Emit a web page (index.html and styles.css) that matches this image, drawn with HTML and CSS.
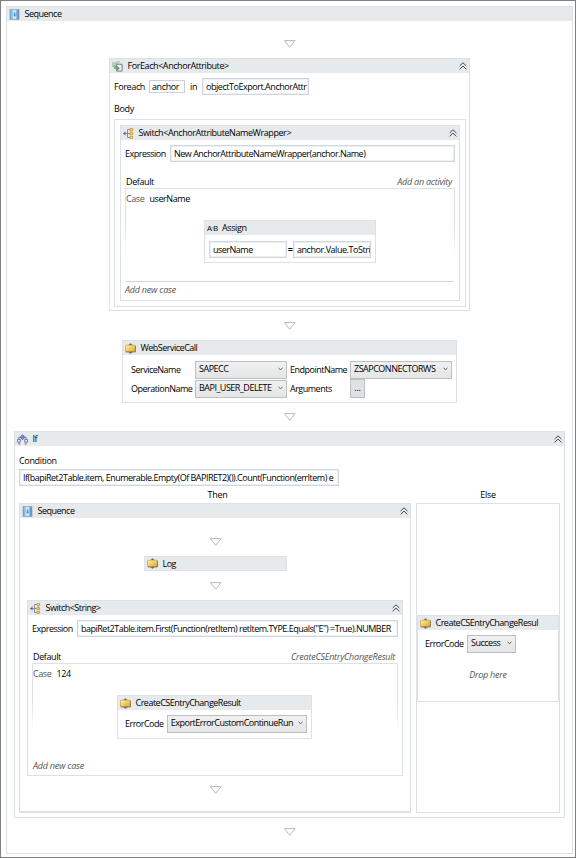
FILE: index.html
```html
<!DOCTYPE html>
<html lang="en">
<head>
<meta charset="utf-8">
<title>Sequence</title>
<link rel="stylesheet" href="styles.css">
</head>
<body>
<svg class="defs" width="0" height="0" aria-hidden="true">
  <defs>
    <linearGradient id="gold" x1="0" y1="0" x2="1" y2="1"><stop offset="0" stop-color="#fff2a8"/><stop offset="1" stop-color="#dfa51c"/></linearGradient>
    <linearGradient id="blue" x1="0" y1="0" x2="1" y2="0"><stop offset="0" stop-color="#5b9fd0"/><stop offset=".45" stop-color="#d5f3fd"/><stop offset="1" stop-color="#477db0"/></linearGradient>
    <symbol id="seq" viewBox="0 0 10 11"><rect x=".5" y=".5" width="9" height="10" fill="url(#blue)" stroke="#8aa3bc" stroke-width=".7"/><path d="M3 1.2h4v2H3zM3 7.8h4v2H3z" fill="#effcff" stroke="#6eb0d6" stroke-width=".5"/><path d="M5 3.5v3.3M3.8 5.7 5 7l1.2-1.3" fill="none" stroke="#2c86bd" stroke-width=".8"/></symbol>
    <symbol id="act" viewBox="0 0 11 11"><path d="M3.5 2.2 5.5.5l2 1.7M3.5 9l2 1.5L7.5 9" fill="#676157" stroke="#676157" stroke-width=".5"/><rect x=".5" y="2.2" width="10" height="6.6" rx=".5" fill="url(#gold)" stroke="#b8943f" stroke-width=".6"/><path d="M.8 8.9h9.6V3" fill="none" stroke="#7e6535" stroke-width=".7"/></symbol>
    <symbol id="sw" viewBox="0 0 11 11"><path d="M0 5.5h4.5M4.5 1.5v8M4.5 1.5h2.5M4.5 9.5h2.5M4.5 5.5h2.5" fill="none" stroke="#7e8491" stroke-width=".9"/><path d="m.3 5.5 2.2-2.2v4.4z" fill="#4c6fae"/><path d="M7 .6h2.6v2.2H7zM7 4.4h2.6v2.2H7zM7 8.2h2.6v2.2H7z" fill="#f7dd82" stroke="#c99b35" stroke-width=".9"/></symbol>
    <symbol id="each" viewBox="0 0 12 12"><path d="M.8 2h5.4v4.4H.8z" fill="#b9ddb0" stroke="#8aa99a" stroke-width=".7"/><path d="M5 3.6h6v7.4H5z" fill="#edf3fb" stroke="#657494"/><path d="M3 4.5v3.4h4M5.6 6l2 1.9-2 1.9" fill="none" stroke="#5aa648" stroke-width="1.3"/><path d="M5 .8h3.4v2" fill="none" stroke="#9ccf8b" stroke-width="1"/></symbol>
    <symbol id="if" viewBox="0 0 12 11"><path d="M2 6V3.2h8V6" fill="none" stroke="#6b78a2" stroke-width=".9"/><path d="m6 .2 2.7 2.8L6 5.8 3.3 3z" fill="#7787cf" stroke="#4a5792" stroke-width=".7"/><path d="M.6 5.4h3v3h-3zM8.4 5.4h3v3h-3z" fill="#edf1fc" stroke="#5b6b9e" stroke-width=".9"/><path d="M2.1 8.4v2.2h1.5M9.9 8.4v2.2H8.4" fill="none" stroke="#5b6b9e" stroke-width=".9"/></symbol>
    <symbol id="tri" viewBox="0 0 12 8"><path d="M.4.6h10.6L5.7 7.3z" fill="#fff" stroke="#adb2bb" stroke-width=".9"/></symbol>
    <symbol id="up" viewBox="0 0 8 8"><path d="M.6 4 4 .8 7.4 4M.6 7.3 4 4.1l3.4 3.2" fill="none" stroke="#424b5c" stroke-width="1"/></symbol>
    <symbol id="dn" viewBox="0 0 5 4"><path d="M.6.7 2.5 3 4.4.7" fill="none" stroke="#666" stroke-width=".9"/></symbol>
  </defs>
</svg>
<main class="root box">
  <header class="bar"><svg class="ic"><use href="#seq"/></svg><span class="title">Sequence</span></header>
  <svg class="tri t1"><use href="#tri"/></svg>
  <section class="box foreach">
    <header class="bar"><svg class="ic"><use href="#each"/></svg><span class="title wide">ForEach&lt;AnchorAttribute&gt;</span><svg class="up"><use href="#up"/></svg></header>
    <div class="loop"><span class="l-foreach">Foreach</span><div class="field small">anchor</div><span class="l-in">in</span><div class="field object">objectToExport.AnchorAttr</div></div>
    <div class="bodylabel">Body</div>
    <div class="bodybox">
      <section class="box switch">
        <header class="bar"><svg class="ic"><use href="#sw"/></svg><span class="title wide">Switch&lt;AnchorAttributeNameWrapper&gt;</span><svg class="up"><use href="#up"/></svg></header>
        <div class="expr"><span class="l-expr">Expression</span><div class="field grow">New AnchorAttributeNameWrapper(anchor.Name)</div></div>
        <div class="default"><span>Default</span><em class="hint">Add an activity</em></div>
        <div class="case lined">
          <div class="caselabel"><span class="muted">Case</span><span>userName</span></div>
          <section class="box assign">
            <header class="bar"><span class="ab">A<i>•</i>B</span><span class="title">Assign</span></header>
            <div class="pair"><div class="field">userName</div><b>=</b><div class="field value">anchor.Value.ToStri</div></div>
          </section>
        </div>
        <em class="add">Add new case</em>
      </section>
    </div>
  </section>
  <svg class="tri t2"><use href="#tri"/></svg>
  <section class="box service">
    <header class="bar"><svg class="ic"><use href="#act"/></svg><span class="title">WebServiceCall</span></header>
    <div class="params">
      <span>ServiceName</span><div class="combo">SAPECC<svg><use href="#dn"/></svg></div><span class="second">EndpointName</span><div class="combo endpoint">ZSAPCONNECTORWS<svg><use href="#dn"/></svg></div>
      <span>OperationName</span><div class="combo">BAPI_USER_DELETE<svg><use href="#dn"/></svg></div><span class="second">Arguments</span><div class="dots">...</div>
    </div>
  </section>
  <svg class="tri t3"><use href="#tri"/></svg>
  <section class="box if">
    <header class="bar"><svg class="ic"><use href="#if"/></svg><span class="title">If</span><svg class="up"><use href="#up"/></svg></header>
    <div class="condition">Condition</div>
    <div class="field cond">If(bapiRet2Table.item, Enumerable.Empty(Of BAPIRET2)()).Count(Function(errItem) e</div>
    <div class="branches">
      <div class="label then-label">Then</div><div class="label">Else</div>
      <section class="box then">
        <header class="bar"><svg class="ic"><use href="#seq"/></svg><span class="title">Sequence</span><svg class="up"><use href="#up"/></svg></header>
        <svg class="tri t4"><use href="#tri"/></svg>
        <section class="box log"><header class="bar"><svg class="ic"><use href="#act"/></svg><span class="title">Log</span></header></section>
        <svg class="tri t5"><use href="#tri"/></svg>
        <section class="box switch string">
          <header class="bar"><svg class="ic"><use href="#sw"/></svg><span class="title">Switch&lt;String&gt;</span><svg class="up"><use href="#up"/></svg></header>
          <div class="expr"><span class="l-expr">Expression</span><div class="field grow">bapiRet2Table.item.First(Function(retItem) retItem.TYPE.Equals("E") =True).NUMBER</div></div>
          <div class="default"><span>Default</span><em class="hint">CreateCSEntryChangeResult</em></div>
          <div class="case">
            <div class="caselabel"><span class="muted">Case</span><span>124</span></div>
            <section class="box result">
              <header class="bar"><svg class="ic"><use href="#act"/></svg><span class="title">CreateCSEntryChangeResult</span></header>
              <div class="error"><span>ErrorCode</span><div class="combo">ExportErrorCustomContinueRun<svg><use href="#dn"/></svg></div></div>
            </section>
          </div>
          <em class="add">Add new case</em>
        </section>
        <svg class="tri t6"><use href="#tri"/></svg>
      </section>
      <section class="box else">
        <section class="box elseresult">
          <header class="bar"><svg class="ic"><use href="#act"/></svg><span class="title">CreateCSEntryChangeResul</span></header>
          <div class="error"><span>ErrorCode</span><div class="combo">Success<svg><use href="#dn"/></svg></div></div>
          <em class="drop">Drop here</em>
        </section>
      </section>
    </div>
  </section>
  <svg class="tri t7"><use href="#tri"/></svg>
</main>
</body>
</html>
```
FILE: styles.css
```css
* { box-sizing: border-box; }
body { margin: 0; width: 576px; height: 858px; padding: 5px 2px 3px 5px; border: 1px solid #808080; background: #fff; color: #000; font: 9px/12px "Open Sans", "Noto Sans", sans-serif; letter-spacing: -.5px; white-space: nowrap; overflow: hidden; }
em { letter-spacing: -.24px; }
.defs { position: absolute; }
.box { display: flex; flex-direction: column; border: 1px solid #dce1e6; background: #fff; }
.root { width: 567px; height: 848px; }
.bar { display: flex; align-items: center; height: 14px; flex: none; background: #e6eaed; padding: 0 2px; }
.ic { width: 11px; height: 11px; flex: none; }
.title { margin-left: 4.5px; }
.wide { letter-spacing: -.42px; }
.up { width: 8px; height: 8px; margin-left: auto; flex: none; }
.tri { width: 12px; height: 8px; flex: none; }
.t1 { margin: 19px 0 10px 277px; }
.field { height: 17px; border: 1px solid #ced7df; box-shadow: inset 0 0 0 1px #edf1f4; padding: 2px 3px 0 3px; overflow: hidden; line-height: 12px; }

.foreach { width: 361px; height: 253px; margin-left: 102px; flex: none; }
.loop { display: flex; align-items: center; height: 17px; margin: 5px 0 0 4px; flex: none; letter-spacing: -.38px; }
.l-foreach { width: 35px; }
.small { width: 36px; height: 13px; padding: 0 2px; line-height: 11px; border-color: #ccd0de; box-shadow: none; }
.l-in { width: 17px; padding-left: 5px; }
.object { width: 107px; letter-spacing: -.46px; }
.bodylabel { margin: 8px 0 0 4px; letter-spacing: -.35px; }
.bodybox { width: 352px; height: 188px; margin: 4px 0 0 4px; padding: 5px; border: 1px solid #dce1e6; }
.switch { width: 340px; height: 176px; flex: none; }
.expr { display: flex; align-items: center; margin: 5px 4px 0 4px; height: 17px; flex: none; }
.l-expr { width: 45px; }
.grow { flex: 1; min-width: 0; }
.default { display: flex; justify-content: space-between; margin: 14px 7px 0 5px; height: 12px; flex: none; letter-spacing: -.4px; }
.hint, .add, .drop, .muted { color: #555; }
.case { height: 94px; margin: 0 4px; flex: none; border: 1px solid; border-image: linear-gradient(#dce1e6 0, #dce1e6 40%, #fff 72%) 1; }
.lined { background: linear-gradient(#cfd8db, #cfd8db) bottom / 100% 1px no-repeat; border-bottom: 0; }
.caselabel { display: flex; gap: 5px; height: 12px; margin-top: 4px; letter-spacing: -.4px; }
.add { margin: 2px 0 0 4px; }
.assign { width: 172px; height: 43px; margin: 15px 0 0 78px; }
.ab { display: flex; align-items: center; width: 14px; font-size: 8px; letter-spacing: -.5px; }
.ab i { color: #49a660; font-size: 5px; font-style: normal; line-height: 8px; }
.assign .title { margin-left: 1px; letter-spacing: -.4px; }
.pair { display: flex; align-items: center; margin: 6px 4px 0; }
.pair .field { width: 78px; }
.pair .value { letter-spacing: -.45px; }
.pair b { width: 6px; text-align: center; }

.t2 { margin: 11px 0 10px 277px; }
.service { width: 335px; height: 63px; margin-left: 115px; flex: none; }
.params { display: grid; grid-template-columns: 64px 92px 63px 102px; grid-template-rows: 18px 19px; margin: 6px 0 0 8px; align-items: center; }
.second { padding-left: 3px; }
.combo, .dots { height: 18px; border: 1px solid #bcbfc1; background: linear-gradient(#f0f0f0, #e4e5e6); padding: 0 3px 2px; display: flex; align-items: center; }
.combo svg { width: 5px; height: 4px; margin-left: auto; flex: none; }
.dots { width: 15px; height: 19px; justify-content: center; background: #e0e1e2; letter-spacing: -.2px; }
.t3 { margin: 10px 0 10px 277px; }

.if { width: 551px; height: 387px; margin-left: 7px; flex: none; }
.condition { margin: 9px 0 2px 4px; letter-spacing: -.35px; }
.cond { width: 320px; margin-left: 4px; flex: none; }
.branches { display: grid; grid-template-columns: 392px 144px; grid-template-rows: 17px 310px; column-gap: 5px; margin-left: 4px; }
.label { text-align: center; padding-top: 3px; letter-spacing: -.3px; }
.then-label { padding-left: 5px; }
.then { border-width: 1px 1px 2px 1px; }
.t4 { margin: 20px 0 10px 190px; }
.log { width: 143px; height: 15px; margin-left: 124px; flex: none; }
.log .bar { height: 13px; }
.t5 { margin: 11px 0 10px 190px; }
.string { width: 376px; margin-left: 7px; }
.string .add { margin-top: 3px; margin-left: 5px; }
.result { width: 195px; height: 44px; margin: 15px 0 0 84px; }
.error { display: flex; align-items: center; margin: 5px 4px 0 7px; }
.error span { width: 42px; }
.error .combo { width: 141px; }
.t6 { margin: 10px 0 0 190px; }
.else { padding-top: 111px; }
.elseresult { width: 142px; height: 87px; }
.elseresult .error .combo { width: 49px; }
.drop { align-self: center; margin-top: 16px; }
.t7 { margin: 10px 0 0 277px; }
```
